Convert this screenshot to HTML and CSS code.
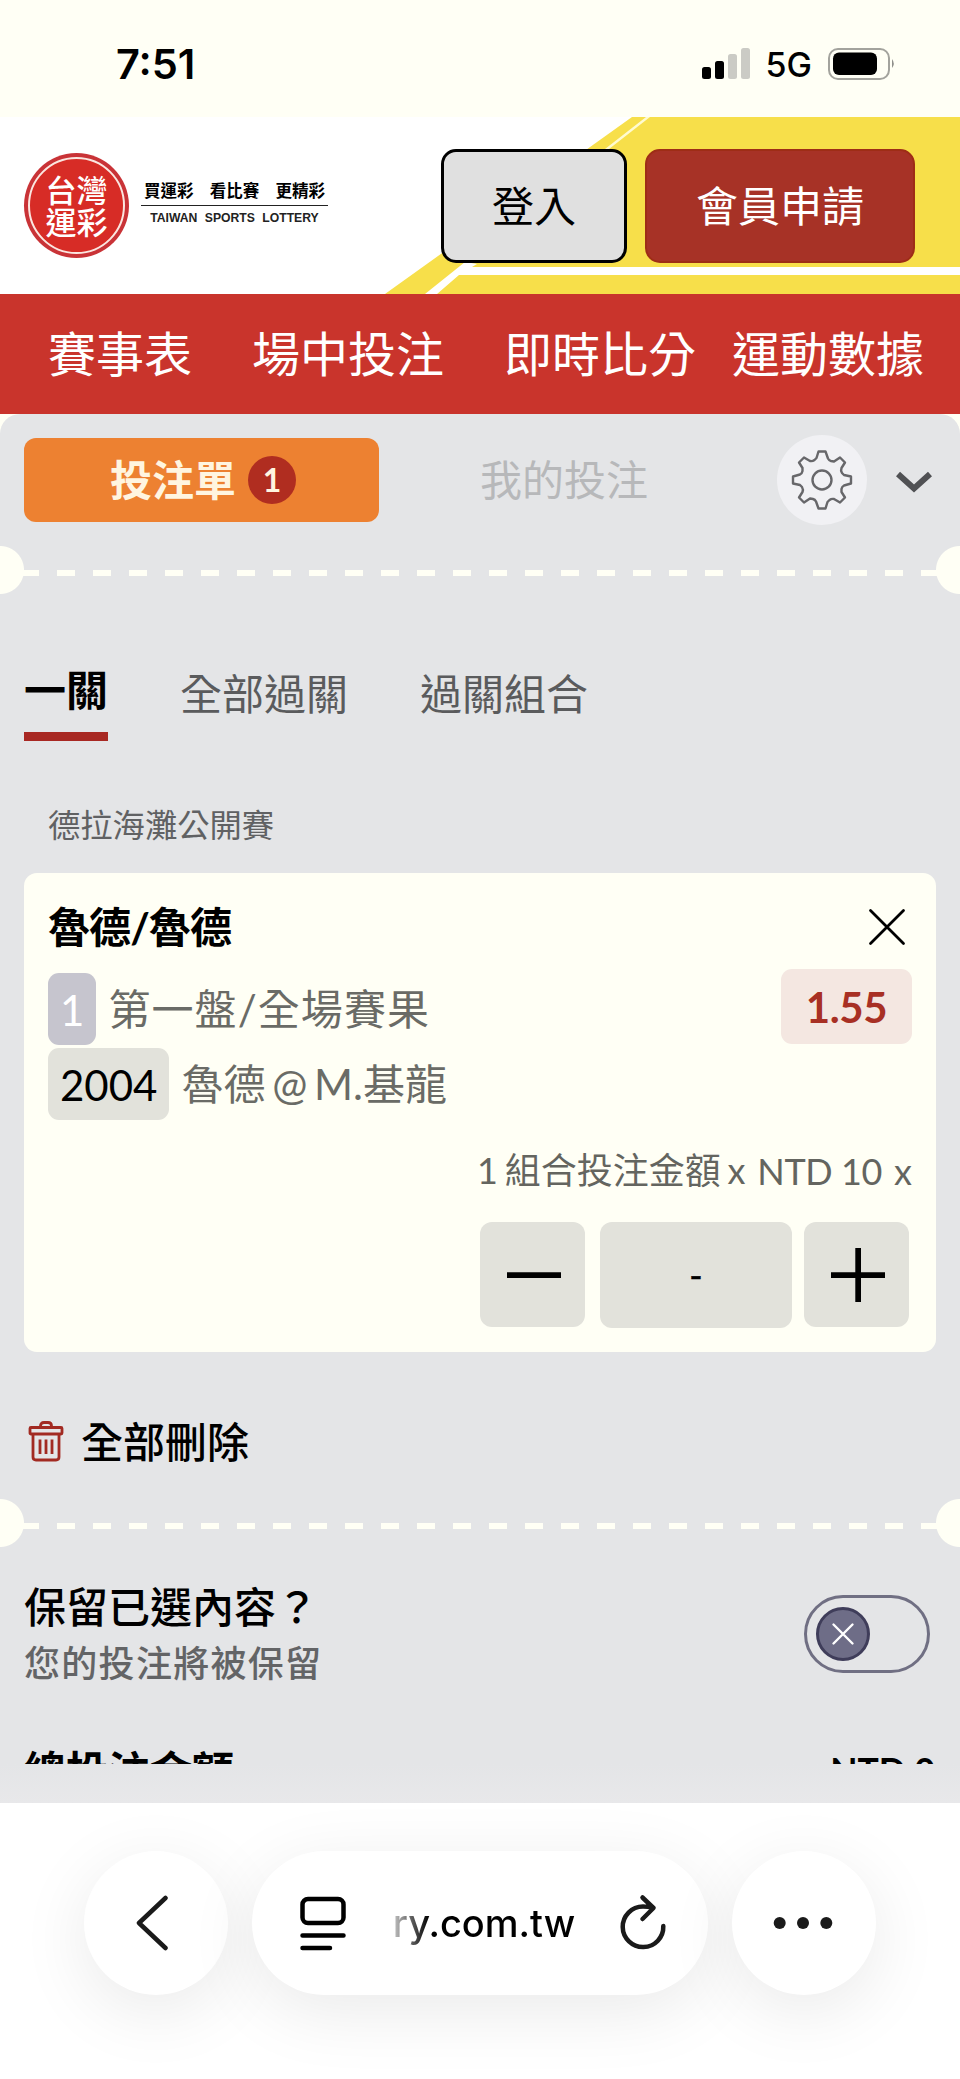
FILE: index.html
```html
<!DOCTYPE html>
<html lang="zh-Hant">
<head>
<meta charset="utf-8">
<title>台灣運彩</title>
<link rel="stylesheet" href="styles.css">
</head>
<body>
<div class="status">
  <span class="time">7:51</span>
  <div class="status-right">
    <svg class="signal" width="48" height="32" viewBox="0 0 48 32"><rect x="0" y="19" width="9" height="12" rx="2.5"/><rect x="13" y="13" width="9" height="18" rx="2.5"/><rect class="dim" x="26" y="6" width="9" height="25" rx="2.5"/><rect class="dim" x="39" y="0" width="9" height="31" rx="2.5"/></svg>
    <span class="net">5G</span>
    <svg class="battery" width="68" height="32" viewBox="0 0 68 32"><rect x="1" y="1" width="60" height="30" rx="9" fill="none" stroke="#a3a39d" stroke-width="2"/><rect x="5" y="4.500" width="44" height="22.500" rx="6"/><path d="M64 11q3.500 4.500 0 9z" fill="#8f8f8a"/></svg>
  </div>
</div>
<header class="header">
  <svg class="header-art" width="960" height="177" viewBox="0 0 960 177">
    <path fill="#f7df4a" d="M632 0H960V177H385Z"/>
    <path fill="#fffbd0" d="M646 0h4L609 32h-4z"/>
    <path fill="#fff" d="M425 177 465 145l12 2-5 3h488v8H459l-22 19z"/>
  </svg>
  <div class="brand">
    <div class="seal"><div class="seal-ring"><span>台灣</span><span>運彩</span></div></div>
    <div class="brand-text">
      <div class="slogan"><span>買運彩</span><span>看比賽</span><span>更精彩</span></div>
      <div class="brand-en">TAIWAN SPORTS LOTTERY</div>
    </div>
  </div>
  <div class="btn login">登入</div>
  <div class="btn join">會員申請</div>
</header>
<nav class="nav"><span class="n1">賽事表</span><span class="n2">場中投注</span><span class="n3">即時比分</span><span class="n4">運動數據</span></nav>
<main class="slip-wrap">
  <div class="slip">
    <div class="slip-tabs">
      <div class="tab-slip"><span class="tab-label">投注單</span><span class="count">1</span></div>
      <div class="tab-mine">我的投注</div>
      <div class="gear">
        <svg width="62" height="62" viewBox="-31 -31 62 62" fill="none" stroke="#67676a" stroke-width="2.400"><circle r="9.500"/><path stroke-linejoin="round" d="M-3.500-28.500H3.500L6-21.500Q7-19.500 9-19L12-18.500 18-22.500 23-17.500 19.500-12Q18.500-9.500 20-7L22-5 29-3.500V3.500L22 5.500Q20 6.500 19.500 9L19.500 12 23 17.500 18 22.500 12 19Q9.500 18.500 7.500 20L5.500 22 3.500 28.500H-3.500L-6 21.500Q-7 19.500-9 19L-12 18.500-18 22.500-23 17.500-19.500 12Q-18.500 9.500-20 7L-22 5-29 3.500V-3.500L-22-5.500Q-20-6.500-19.500-9L-19.500-12-23-17.500-18-22.500-12-19Q-9.500-18.500-7.500-20L-5.500-22Z"/></svg>
      </div>
      <svg class="chev" width="36" height="22" viewBox="0 0 36 22" fill="none" stroke="#505154" stroke-width="6"><path d="M2 3 18 17.500 34 3"/></svg>
    </div>
    <div class="perf"></div>
    <div class="modes"><span class="mode on">一關</span><span class="mode">全部過關</span><span class="mode">過關組合</span></div>
    <div class="league">德拉海灘公開賽</div>
    <section class="card">
      <div class="card-head"><span class="match">魯德/魯德</span>
        <svg width="38" height="38" viewBox="0 0 38 38" fill="none" stroke="#000" stroke-width="2.800" stroke-linecap="round"><path d="M2.500 2.500 35.500 35.500M35.500 2.500 2.500 35.500"/></svg>
      </div>
      <div class="rows">
        <div class="lines">
          <div class="line"><span class="chip lilac">1</span><span class="market">第一盤/全場賽果</span></div>
          <div class="line"><span class="chip">2004</span><span class="players">魯德 @ M.基龍</span></div>
        </div>
        <span class="odds">1.55</span>
      </div>
      <div class="stake"><span class="combo">1 組合投注金額 x</span><span class="unit">NTD 10</span><span class="times">x</span></div>
      <div class="stepper">
        <div class="step"><svg width="54" height="54" viewBox="0 0 54 54"><path d="M0 24.300h54v5.700H0z"/></svg></div>
        <div class="amount">-</div>
        <div class="step"><svg width="54" height="54" viewBox="0 0 54 54"><path d="M0 24.300h54v5.700H0zM24.300 0h5.700v54h-5.700z"/></svg></div>
      </div>
    </section>
    <div class="clear">
      <svg width="36" height="41" viewBox="0 0 36 41" fill="none" stroke="#a22a22" stroke-width="2.800" stroke-linejoin="round"><rect x="2" y="6.500" width="32" height="6.500" rx="1"/><path d="M12.500 6.500V5q0-3.500 3.500-3.500h4q3.500 0 3.500 3.500v1.500M5 13V36q0 3 3 3H28q3 0 3-3V13M12 18.500V33M18 18.500V33M24 18.500V33"/></svg>
      <span class="clear-label">全部刪除</span>
    </div>
    <div class="perf"></div>
    <div class="keep">
      <div><div class="keep-title">保留已選內容？</div><div class="keep-sub">您的投注將被保留</div></div>
      <div class="toggle"><div class="knob"><svg width="24" height="24" viewBox="0 0 24 24" fill="none" stroke="#fff" stroke-width="2.400" stroke-linecap="round"><path d="M2.500 2.500 21.500 21.500M21.500 2.500 2.500 21.500"/></svg></div></div>
    </div>
    <div class="total"><span>總投注金額</span><span class="sum">NTD 0</span></div>
    <div class="veil"></div>
  </div>
</main>
<footer class="browser">
  <div class="pill round back"><svg width="32" height="56" viewBox="0 0 32 56" fill="none" stroke="#1a1a1a" stroke-width="4.500" stroke-linecap="round" stroke-linejoin="round"><path d="M29.500 3 3 28 29.500 53"/></svg></div>
  <div class="pill address">
    <svg width="48" height="56" viewBox="0 0 48 56" fill="none" stroke="#000" stroke-width="4.500" stroke-linecap="round"><rect x="3.500" y="4" width="41" height="24" rx="5.500"/><path d="M3.500 40.500h41M3.500 53H31"/></svg>
    <span class="url">ry.com.tw</span>
    <svg class="reload" width="48" height="58" viewBox="0 0 48 58" fill="none" stroke="#1a1a1a" stroke-width="4.500" stroke-linecap="round" stroke-linejoin="round"><path d="M44.300 32A20.300 20.300 0 1 1 24 12.500Q29 12.500 34.500 14M23.500 3.500 34.500 14 23.500 25"/></svg>
  </div>
  <div class="pill round more"><svg width="60" height="14" viewBox="0 0 60 14" fill="#1a1a1a"><circle cx="6.700" cy="7" r="6"/><circle cx="30" cy="7" r="6"/><circle cx="53.300" cy="7" r="6"/></svg></div>
</footer>
</body>
</html>
```

FILE: styles.css
```css
* { box-sizing: border-box; }
body { margin: 0; width: 960px; height: 2079px; overflow: hidden; background: #fffff5; color: #000; font-family: Lato, "Noto Sans CJK TC", sans-serif; }
svg { display: block; flex: none; }
span, .btn, .tab-mine, .league { white-space: nowrap; }

.status { height: 117px; display: flex; justify-content: space-between; align-items: center; padding: 10px 64px 0 116px; font-family: Inter, sans-serif; }
.time { font-size: 41.500px; font-weight: 600; }
.status-right { display: flex; align-items: center; }
.signal .dim { fill: #cbcbc5; }
.net { font-size: 34px; font-weight: 500; margin: 2px 16px 0 16px; }

.header { position: relative; height: 177px; background: #fff; display: flex; align-items: flex-start; padding: 32px 45px 0 24px; }
.header-art { position: absolute; left: 0; top: 0; }
.brand { position: relative; display: flex; width: 417px; padding-top: 4px; }
.seal { width: 105px; height: 105px; border-radius: 50%; background: #c93337; padding: 4px; flex: none; }
.seal-ring { width: 97px; height: 97px; border: 2px solid #fbe6e0; border-radius: 50%; background: #d72c26; color: #fff; display: flex; flex-direction: column; align-items: center; justify-content: center; padding-bottom: 1px; font: 500 31px/32px "Noto Sans CJK TC", sans-serif; }
.brand-text { margin: 27px 0 0 12px; width: 187px; }
.slogan { display: flex; justify-content: space-between; padding: 0 3px; font: 700 16.500px/21px "Noto Sans CJK TC", sans-serif; border-bottom: 1.500px solid #222; height: 26px; }
.brand-en { font: 700 12.200px/14px "Liberation Sans", sans-serif; word-spacing: 4px; color: #222; text-align: center; margin-top: 5px; white-space: nowrap; }
.btn { position: relative; height: 114px; border-radius: 15px; font-size: 42px; line-height: 110px; text-align: center; }
.login { width: 186px; background: #e0e0e0; border: 3px solid #000; line-height: 108px; }
.join { width: 270px; margin-left: 18px; background: #a73226; border: 2px solid #9e2d16; color: #fff; }

.nav { height: 120px; background: #c9342c; color: #fff; font-size: 48px; line-height: 120px; display: flex; padding-left: 48px; }
.n2 { margin-left: 60px; }
.n3 { margin-left: 60px; }
.n4 { margin-left: 36px; }

.slip-wrap { height: 1389px; background: #fffff5; }
.slip { height: 1389px; background: #e4e5e7; border-radius: 20px 20px 0 0; display: flex; flex-direction: column; overflow: hidden; }
.slip-tabs { display: flex; align-items: center; height: 132px; padding-left: 24px; flex: none; }
.tab-slip { width: 355px; height: 84px; border-radius: 12px; background: #ed8131; color: #fff5e0; display: flex; align-items: center; justify-content: center; gap: 12px; font-size: 42px; font-weight: 700; padding-left: 3px; }
.tab-label { padding-bottom: 5px; }
.count { width: 48px; height: 48px; border-radius: 50%; background: #b02d20; font-size: 32px; line-height: 48px; text-align: center; }
.tab-mine { margin-left: 101px; width: 168px; font-size: 42px; color: #b7b8ba; padding-bottom: 5px; }
.gear { width: 90px; height: 90px; border-radius: 50%; background: #f1f1f4; margin-left: 129px; display: flex; align-items: center; justify-content: center; }
.chev { margin: 4px 0 0 29px; }
.perf { height: 48px; flex: none; background: radial-gradient(circle at 0 24px, #fffff5 23.500px, transparent 24.500px), radial-gradient(circle at 960px 24px, #fffff5 23.500px, transparent 24.500px), repeating-linear-gradient(90deg, #fffff5 0 18px, transparent 18px 36px) 21px 24px / 918px 6px no-repeat; }
.modes { display: flex; height: 147px; padding: 0 24px; align-items: flex-end; gap: 72px; color: #5a5b5d; font-size: 42px; flex: none; }
.mode { height: 84px; line-height: 75px; }
.mode.on { color: #000; font-weight: 700; line-height: 67px; border-bottom: 9px solid #a82823; }
.league { margin: 60px 0 0 48px; height: 48px; line-height: 48px; font-size: 32.300px; color: #606163; flex: none; }
.card { margin: 24px 24px 0; height: 479px; flex: none; border-radius: 13px; background: #fffff5; padding: 24px 24px 0; }
.card-head { height: 60px; display: flex; justify-content: space-between; align-items: center; font-size: 42px; font-weight: 700; padding-right: 6px; }
.match { letter-spacing: -0.900px; padding-bottom: 6px; }
.rows { display: flex; justify-content: space-between; align-items: flex-start; padding-top: 12px; }
.lines { display: flex; flex-direction: column; gap: 3px; padding-top: 4px; font-size: 42px; color: #6a6b66; }
.line { display: flex; align-items: center; gap: 12px; height: 72px; line-height: 72px; }
.chip { height: 72px; border-radius: 11px; padding: 0 12px; line-height: 74px; background: #e2e2db; color: #000; }
.chip.lilac { background: #c6c5ce; color: #fff; }
.market { letter-spacing: 1.100px; }
.players { word-spacing: -4px; }
.odds { width: 131px; height: 75px; border-radius: 11px; background: #f4e7e1; color: #a83024; font-size: 42px; font-weight: 700; line-height: 77px; text-align: center; letter-spacing: -0.400px; }
.stake { display: flex; justify-content: flex-end; height: 60px; line-height: 60px; margin-top: 21px; font-size: 36px; color: #64655f; }
.combo { word-spacing: -2.500px; line-height: 58px; }
.unit { margin: 0 12px; letter-spacing: -0.400px; }
.stepper { display: flex; justify-content: flex-end; align-items: flex-start; margin-top: 21px; padding-right: 3px; }
.step { width: 105px; height: 105px; border-radius: 12px; background: #e2e2db; display: flex; align-items: center; justify-content: center; padding-left: 2px; }
.amount { width: 192px; height: 106px; margin: 0 12px 0 15px; border-radius: 12px; background: #e2e2db; text-align: center; font: 36px/107px Lato, sans-serif; -webkit-text-stroke: 0.500px #000; }
.clear { height: 60px; margin: 59px 24px 0 28px; display: flex; align-items: center; gap: 17px; font-size: 42px; font-weight: 500; flex: none; }
.clear-label { padding-bottom: 4px; }
.clear + .perf { margin-top: 28px; }
.keep { display: flex; justify-content: space-between; padding: 30px 30px 0 24px; height: 160px; flex: none; font-weight: 500; }
.keep-title { font-size: 42px; line-height: 60px; }
.keep-sub { font-size: 36px; line-height: 52px; letter-spacing: 1.300px; color: #636466; }
.toggle { width: 126px; height: 78px; border: 3px solid #706f83; border-radius: 39px; margin-top: 18px; padding: 9px; }
.knob { width: 54px; height: 54px; border-radius: 50%; border: 3px solid #3f3d5a; background: #6e6d87; display: flex; align-items: center; justify-content: center; }
.total { display: flex; justify-content: space-between; height: 33px; overflow: hidden; margin-top: 24px; padding: 0 24px; font-size: 42px; font-weight: 700; line-height: 80px; flex: none; }
.sum { font-size: 35.500px; line-height: 79px; padding-right: 1px; }
.veil { flex: 1; background: linear-gradient(#e4e5e7, #e8e8ea); }

.browser { height: 276px; background: #fff; display: flex; justify-content: center; gap: 24px; padding-top: 48px; overflow: hidden; }
.pill { height: 144px; border-radius: 72px; background: #fff; box-shadow: 0 16px 70px rgba(0,0,0,.085); display: flex; align-items: center; justify-content: center; }
.round { width: 144px; }
.back { padding-right: 9px; }
.more { padding-right: 2px; }
.address { width: 456px; gap: 45px; padding-left: 6px; }
.url { font: 500 38px/50px Inter, sans-serif; margin: 0 -1px 0 1px; background: linear-gradient(90deg, #c4c4c4, #000 36px); -webkit-background-clip: text; background-clip: text; color: transparent; }
```
